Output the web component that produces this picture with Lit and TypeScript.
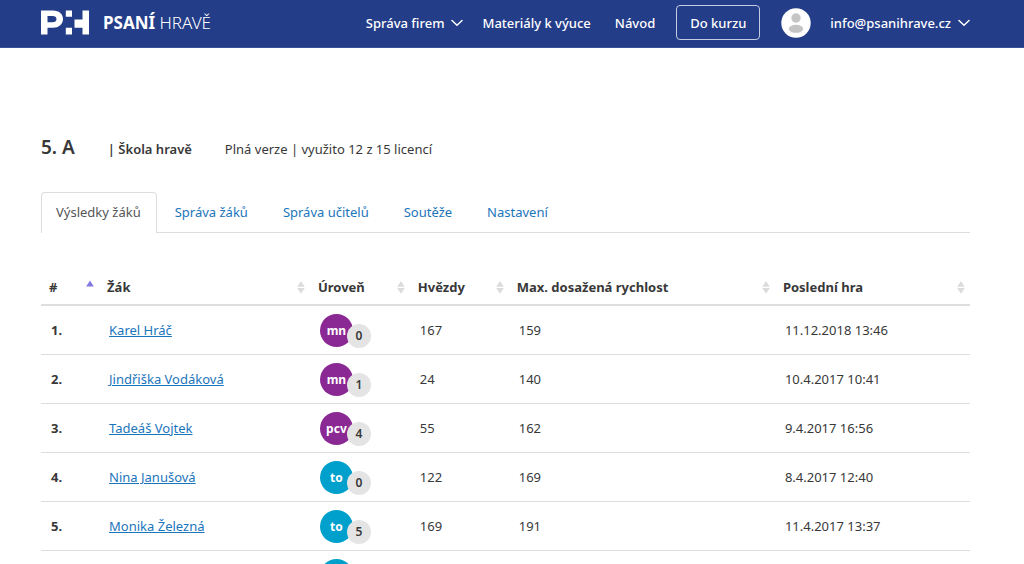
import { LitElement, html, css } from "lit";
import { customElement } from "lit/decorators.js";
import { classMap } from "lit/directives/class-map.js";

interface Pupil {
  name: string;
  level: string;
  group: "letters" | "start";
  badge: string;
  stars: string;
  speed: string;
  last: string;
}

const PUPILS: Pupil[] = [
  { name: "Karel Hráč", level: "mn", group: "letters", badge: "0", stars: "167", speed: "159", last: "11.12.2018 13:46" },
  { name: "Jindřiška Vodáková", level: "mn", group: "letters", badge: "1", stars: "24", speed: "140", last: "10.4.2017 10:41" },
  { name: "Tadeáš Vojtek", level: "pcv", group: "letters", badge: "4", stars: "55", speed: "162", last: "9.4.2017 16:56" },
  { name: "Nina Janušová", level: "to", group: "start", badge: "0", stars: "122", speed: "169", last: "8.4.2017 12:40" },
  { name: "Monika Železná", level: "to", group: "start", badge: "5", stars: "169", speed: "191", last: "11.4.2017 13:37" },
  { name: "", level: "", group: "start", badge: "", stars: "", speed: "", last: "" },
];

const chevron = html`<svg class="chevron" viewBox="0 0 12 8" aria-hidden="true">
  <path d="M1 1.5L6 6.2L11 1.5" fill="none" stroke="currentColor" stroke-width="1.5" stroke-linecap="round" />
</svg>`;

@customElement("app-header")
class AppHeader extends LitElement {
  static styles = css`
    :host { display: block; }
    .bar {
      display: flex;
      align-items: center;
      box-sizing: border-box;
      height: 48px;
      padding: 0 54px 2px 41px;
      background: #233d89;
      border-bottom: 1px solid #3a5198;
      color: #fff;
      font-size: 13px;
      font-weight: 500;
      line-height: 20px;
      white-space: nowrap;
    }
    a, button { color: inherit; font: inherit; text-decoration: none; }
    button { background: none; border: 0; padding: 0; display: flex; align-items: center; gap: 7px; }
    .brand { display: flex; align-items: center; gap: 13px; margin-right: auto; font-size: 17px; }
    .logo { width: 49px; height: 26px; display: block; }
    .light { font-weight: 300; }
    .nav { display: flex; align-items: center; gap: 24px; }
    .group { display: flex; align-items: center; gap: 19px; }
    .chevron { width: 12px; height: 8px; display: block; }
    .user { display: flex; align-items: center; gap: 21px; margin-left: 21px; }
    .course {
      box-sizing: border-box;
      height: 35px;
      padding: 0 13px;
      display: flex;
      align-items: center;
      border: 1px solid #c5cce2;
      border-radius: 4px;
    }
    .avatar { width: 30px; height: 30px; display: block; }
  `;

  render() {
    return html`
      <header class="bar">
        <a class="brand" href="#">
          <svg class="logo" viewBox="0 0 49 26" fill="#fff" aria-hidden="true">
            <path fill-rule="evenodd" d="M0 0.500H12C18 0.500 22 4 22 9S18 17.800 12 17.800H6.500V24.500H0ZM6.500 6V12.300H11.500C14 12.300 15.500 11.200 15.500 9.100S14 6 11.500 6Z" />
            <path d="M24.800 0.500H31V6.800H24.800ZM24.800 17.800H31V24.500H24.800ZM41.500 0.500H48V24.500H41.500V17.800H33.500V9.500H41.500Z" />
          </svg>
          <span><strong>PSANÍ</strong> <span class="light">HRAVĚ</span></span>
        </a>
        <nav class="nav">
          <div class="group">
            <button type="button">Správa firem ${chevron}</button>
            <a href="#">Materiály k výuce</a>
          </div>
          <a href="#">Návod</a>
        </nav>
        <div class="user">
          <a class="course" href="#">Do kurzu</a>
          <div class="group">
            <svg class="avatar" viewBox="0 0 30 30" aria-hidden="true">
              <circle cx="15" cy="15" r="14.700" fill="#fff" />
              <circle cx="15" cy="10" r="4.700" fill="#c4c4c4" />
              <ellipse cx="15" cy="20.800" rx="7.200" ry="4" fill="#c4c4c4" />
            </svg>
            <button type="button">info@psanihrave.cz ${chevron}</button>
          </div>
        </div>
      </header>
    `;
  }
}

@customElement("results-table")
class ResultsTable extends LitElement {
  static styles = css`
    :host { display: block; }
    table { width: 100%; table-layout: fixed; border-collapse: separate; border-spacing: 0; }
    .c-rank { width: 6.25%; }
    .c-name { width: 22.7%; }
    .c-level { width: 10.75%; }
    .c-stars { width: 10.65%; }
    .c-speed { width: 28.65%; }
    th, td { text-align: left; white-space: nowrap; box-sizing: border-box; }
    th { height: 36px; padding: 0 4px 0 8px; border-bottom: 2px solid #ddd; }
    td { height: 49px; padding: 0 10px; border-bottom: 1px solid #ddd; }
    .sort {
      display: flex;
      align-items: center;
      justify-content: space-between;
      width: 100%;
      padding: 0;
      border: 0;
      background: none;
      color: inherit;
      font: inherit;
      font-weight: 700;
    }
    .arrows { width: 10px; height: 14px; display: block; fill: #dcdcdc; }
    .arrows.active { fill: #8378e0; }
    .rank { font-weight: 700; }
    .pupil { color: #1b75bb; }
    .level { display: flex; align-items: flex-end; height: 32px; }
    .disc, .count {
      box-sizing: border-box;
      display: flex;
      align-items: center;
      justify-content: center;
      border-radius: 50%;
      flex: none;
      font-size: 12px;
    }
    .disc { width: 33px; height: 33px; align-self: flex-start; color: #fff; font-weight: 700; background: #00a0cc; }
    .disc.letters { background: #8a2894; }
    .count { width: 24px; height: 24px; margin: 0 0 -2px -6px; font-weight: 600; background: #e4e4e4; }
  `;

  private head(label: string, cls: string, active = false) {
    return html`<th class=${cls} scope="col">
      <button class="sort" type="button">
        ${label}
        <svg class=${classMap({ arrows: true, active })} viewBox="0 0 10 14" aria-hidden="true">
          <path d=${active ? "M1.2 6.500L5 0.500L8.800 6.500Z" : "M1.2 6.800L5 1L8.800 6.800ZM1.2 8L5 13.800L8.800 8Z"} />
        </svg>
      </button>
    </th>`;
  }

  render() {
    return html`
      <table>
        <thead>
          <tr>
            ${this.head("#", "c-rank", true)} ${this.head("Žák", "c-name")} ${this.head("Úroveň", "c-level")}
            ${this.head("Hvězdy", "c-stars")} ${this.head("Max. dosažená rychlost", "c-speed")}
            ${this.head("Poslední hra", "c-last")}
          </tr>
        </thead>
        <tbody>
          ${PUPILS.map(
            (p, i) => html`<tr>
              <td class="rank">${p.name ? `${i + 1}.` : ""}</td>
              <td>${p.name ? html`<a class="pupil" href="#">${p.name}</a>` : ""}</td>
              <td>
                <div class="level">
                  <span class=${classMap({ disc: true, letters: p.group === "letters" })}>${p.level}</span>
                  ${p.badge ? html`<span class="count">${p.badge}</span>` : ""}
                </div>
              </td>
              <td>${p.stars}</td>
              <td>${p.speed}</td>
              <td>${p.last}</td>
            </tr>`
          )}
        </tbody>
      </table>
    `;
  }
}

@customElement("app-root")
class AppRoot extends LitElement {
  static styles = css`
    :host {
      display: block;
      height: 100vh;
      overflow: hidden;
      background: #fff;
      color: #383838;
      font: 13px/20px "Noto Sans", "Open Sans", sans-serif;
    }
    .page { padding: 85px 54px 0 41px; }
    .title { display: flex; align-items: baseline; gap: 33px; white-space: nowrap; }
    h1 { margin: 0; font-size: 19px; line-height: 28px; font-weight: 600; }
    .school { font-weight: 600; }
    .tabs { display: flex; gap: 1px; margin-top: 31px; border-bottom: 1px solid #ddd; }
    .tab {
      padding: 9px 16px 10px;
      border: 1px solid transparent;
      border-bottom: 0;
      color: #1b75bb;
      text-decoration: none;
      white-space: nowrap;
    }
    .tab.current {
      margin-bottom: -1px;
      padding: 9px 15px 11px 14px;
      color: #555;
      background: #fff;
      border-color: #ddd;
      border-radius: 4px 4px 0 0;
    }
    .results { margin-top: 37px; }
  `;

  render() {
    const tabs = ["Výsledky žáků", "Správa žáků", "Správa učitelů", "Soutěže", "Nastavení"];
    return html`
      <app-header></app-header>
      <main class="page">
        <div class="title">
          <h1>5. A</h1>
          <span class="school">| Škola hravě</span>
          <span>Plná verze | využito 12 z 15 licencí</span>
        </div>
        <nav class="tabs">
          ${tabs.map((t, i) => html`<a class=${classMap({ tab: true, current: i === 0 })} href="#">${t}</a>`)}
        </nav>
        <results-table class="results"></results-table>
      </main>
    `;
  }
}
